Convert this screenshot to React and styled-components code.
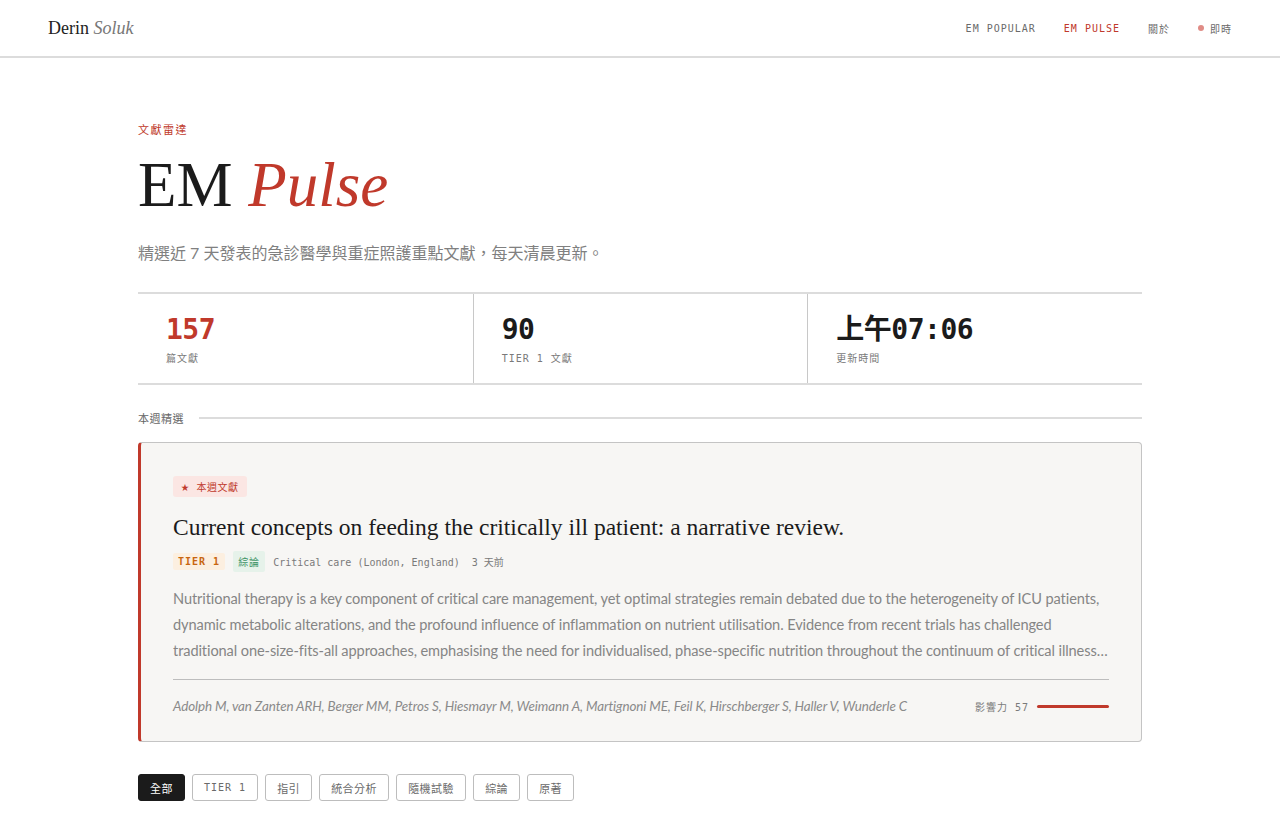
import React from 'react';
import styled, { createGlobalStyle } from 'styled-components';

const RED = '#c0392b';
const INK = '#1b1b1b';
const MUTED = '#7a7a7a';
const LINE = '#dcdcdc';
const CJK = '"Noto Sans CJK TC"';
const SERIF = `"Liberation Serif", ${CJK}, serif`;
const SANS = `"Lato", ${CJK}, sans-serif`;
const MONO = `"DejaVu Sans Mono", ${CJK}, monospace`;

const Global = createGlobalStyle`
  * { box-sizing: border-box; }
  body {
    margin: 0;
    background: #fff;
    color: ${INK};
    font-family: ${SANS};
  }
`;

const Header = styled.header`
  height: 58px;
  padding: 0 48px;
  display: flex;
  align-items: center;
  justify-content: space-between;
  border-bottom: 2px solid ${LINE};
`;

const Logo = styled.div`
  font: 400 18px ${SERIF};
  color: #222;
  em { color: #777; font-style: italic; }
`;

const Nav = styled.nav`
  display: flex;
  align-items: center;
  gap: 28px;
`;

const NavLink = styled.a`
  font: 400 10px ${MONO};
  letter-spacing: 1px;
  color: ${p => (p.$active ? RED : '#6a6a6a')};
  text-decoration: none;
  display: flex;
  align-items: center;
  gap: 6px;
`;

const LiveDot = styled.span`
  width: 6px;
  height: 6px;
  border-radius: 50%;
  background: #e08c86;
`;

const Main = styled.main`
  max-width: 1004px;
  margin: 0 auto;
  padding-top: 63px;
`;

const Eyebrow = styled.div`
  font: 400 11px ${SANS};
  letter-spacing: 1.5px;
  color: ${RED};
`;

const Title = styled.h1`
  margin: 14px 0 0;
  font: 400 63px/68px ${SERIF};
  color: ${INK};
  em { color: ${RED}; font-style: italic; }
`;

const Lead = styled.p`
  margin: 21px 0 0;
  font: 400 16px ${SANS};
  color: #808080;
`;

const Stats = styled.div`
  margin-top: 28px;
  display: grid;
  grid-template-columns: 1fr 1fr 1fr;
  border-top: 2px solid ${LINE};
  border-bottom: 2px solid ${LINE};
`;

const Stat = styled.div`
  padding: 20px 28px 18px;
  & + & { border-left: 1px solid #c8c8c8; }
`;

const StatValue = styled.div`
  font: 700 28px/32px ${MONO};
  color: ${p => (p.$accent ? RED : INK)};
  letter-spacing: -0.5px;
`;

const StatLabel = styled.div`
  margin-top: 4px;
  font: 400 10px ${MONO};
  letter-spacing: 1px;
  color: ${MUTED};
`;

const SectionHead = styled.div`
  margin-top: 25px;
  display: flex;
  align-items: center;
  gap: 15px;
  font: 400 11px ${SANS};
  letter-spacing: 0.5px;
  color: #666;
  &::after {
    content: '';
    flex: 1;
    height: 2px;
    background: ${LINE};
  }
`;

const Feature = styled.article`
  margin-top: 16px;
  background: #f7f6f4;
  border: 1px solid #c4c4c4;
  border-left: 3px solid ${RED};
  border-radius: 4px;
  padding: 31px 32px 27px;
`;

const Badge = styled.span`
  display: inline-flex;
  align-items: center;
  gap: 7px;
  padding: 3px 8px;
  border-radius: 3px;
  background: #fbe6e3;
  color: ${RED};
  font: 400 10px ${SANS};
  letter-spacing: 0.5px;
  small { font-size: 8px; }
`;

const FeatureTitle = styled.h2`
  margin: 15px 0 0;
  font: 400 23.5px/30px ${SERIF};
  color: ${INK};
`;

const Meta = styled.div`
  margin-top: 9px;
  display: flex;
  align-items: center;
  gap: 8px;
  font: 400 10px ${MONO};
  color: ${MUTED};
`;

const Tag = styled.span`
  padding: 3px 5px;
  border-radius: 2px;
  font: ${p => (p.$tone === 'tier' ? 700 : 400)} 10px ${MONO};
  letter-spacing: 1px;
  color: ${p => (p.$tone === 'tier' ? '#c8650f' : '#3d9466')};
  background: ${p => (p.$tone === 'tier' ? '#fcefe0' : '#e6f2ea')};
`;

const Abstract = styled.p`
  margin: 14px 0 0;
  font: 400 14.6px/26px ${SANS};
  letter-spacing: -0.1px;
  color: #858585;
  display: -webkit-box;
  -webkit-line-clamp: 3;
  -webkit-box-orient: vertical;
  overflow: hidden;
`;

const FeatureFoot = styled.div`
  margin-top: 15px;
  padding-top: 18px;
  border-top: 1px solid #bdbdbd;
  display: flex;
  align-items: center;
  justify-content: space-between;
`;

const Authors = styled.div`
  font: italic 400 13.4px ${SANS};
  letter-spacing: -0.1px;
  color: #8a8a8a;
`;

const Impact = styled.div`
  display: flex;
  align-items: center;
  gap: 8px;
  font: 400 10px ${MONO};
  letter-spacing: 1px;
  color: ${MUTED};
`;

const ImpactBar = styled.span`
  width: 72px;
  height: 3px;
  border-radius: 2px;
  background: ${RED};
`;

const Filters = styled.div`
  margin-top: 32px;
  display: flex;
  gap: 7px;
`;

const Chip = styled.button`
  height: 27px;
  padding: 0 11px;
  border-radius: 3px;
  border: 1px solid ${p => (p.$active ? INK : '#bdbdbd')};
  background: ${p => (p.$active ? INK : '#fff')};
  color: ${p => (p.$active ? '#fff' : '#6a6a6a')};
  font: 400 ${p => (p.$mono ? '10px' : '11px')} ${p => (p.$mono ? MONO : SANS)};
  letter-spacing: ${p => (p.$mono ? '1px' : '0.5px')};
  cursor: pointer;
`;

const filters = [
  { label: '全部', active: true },
  { label: 'TIER 1', mono: true },
  { label: '指引' },
  { label: '統合分析' },
  { label: '隨機試驗' },
  { label: '綜論' },
  { label: '原著' },
];

export default function App() {
  return (
    <>
      <Global />
      <Header>
        <Logo>Derin <em>Soluk</em></Logo>
        <Nav>
          <NavLink href="#">EM POPULAR</NavLink>
          <NavLink href="#" $active>EM PULSE</NavLink>
          <NavLink href="#">關於</NavLink>
          <NavLink href="#"><LiveDot />即時</NavLink>
        </Nav>
      </Header>
      <Main>
        <Eyebrow>文獻雷達</Eyebrow>
        <Title>EM <em>Pulse</em></Title>
        <Lead>精選近 7 天發表的急診醫學與重症照護重點文獻，每天清晨更新。</Lead>

        <Stats>
          <Stat>
            <StatValue $accent>157</StatValue>
            <StatLabel>篇文獻</StatLabel>
          </Stat>
          <Stat>
            <StatValue>90</StatValue>
            <StatLabel>TIER 1 文獻</StatLabel>
          </Stat>
          <Stat>
            <StatValue>上午07:06</StatValue>
            <StatLabel>更新時間</StatLabel>
          </Stat>
        </Stats>

        <SectionHead>本週精選</SectionHead>

        <Feature>
          <Badge><small>★</small>本週文獻</Badge>
          <FeatureTitle>Current concepts on feeding the critically ill patient: a narrative review.</FeatureTitle>
          <Meta>
            <Tag $tone="tier">TIER 1</Tag>
            <Tag $tone="review">綜論</Tag>
            <span>Critical care (London, England)&nbsp; 3 天前</span>
          </Meta>
          <Abstract>
            Nutritional therapy is a key component of critical care management, yet optimal strategies remain debated due to the heterogeneity of ICU patients, dynamic metabolic alterations, and the profound influence of inflammation on nutrient utilisation. Evidence from recent trials has challenged traditional one-size-fits-all approaches, emphasising the need for individualised, phase-specific nutrition throughout the continuum of critical illness, from the acute phase to recovery and rehabilitation.
          </Abstract>
          <FeatureFoot>
            <Authors>Adolph M, van Zanten ARH, Berger MM, Petros S, Hiesmayr M, Weimann A, Martignoni ME, Feil K, Hirschberger S, Haller V, Wunderle C</Authors>
            <Impact>影響力 57<ImpactBar /></Impact>
          </FeatureFoot>
        </Feature>

        <Filters>
          {filters.map(f => (
            <Chip key={f.label} $active={f.active} $mono={f.mono}>{f.label}</Chip>
          ))}
        </Filters>
      </Main>
    </>
  );
}
